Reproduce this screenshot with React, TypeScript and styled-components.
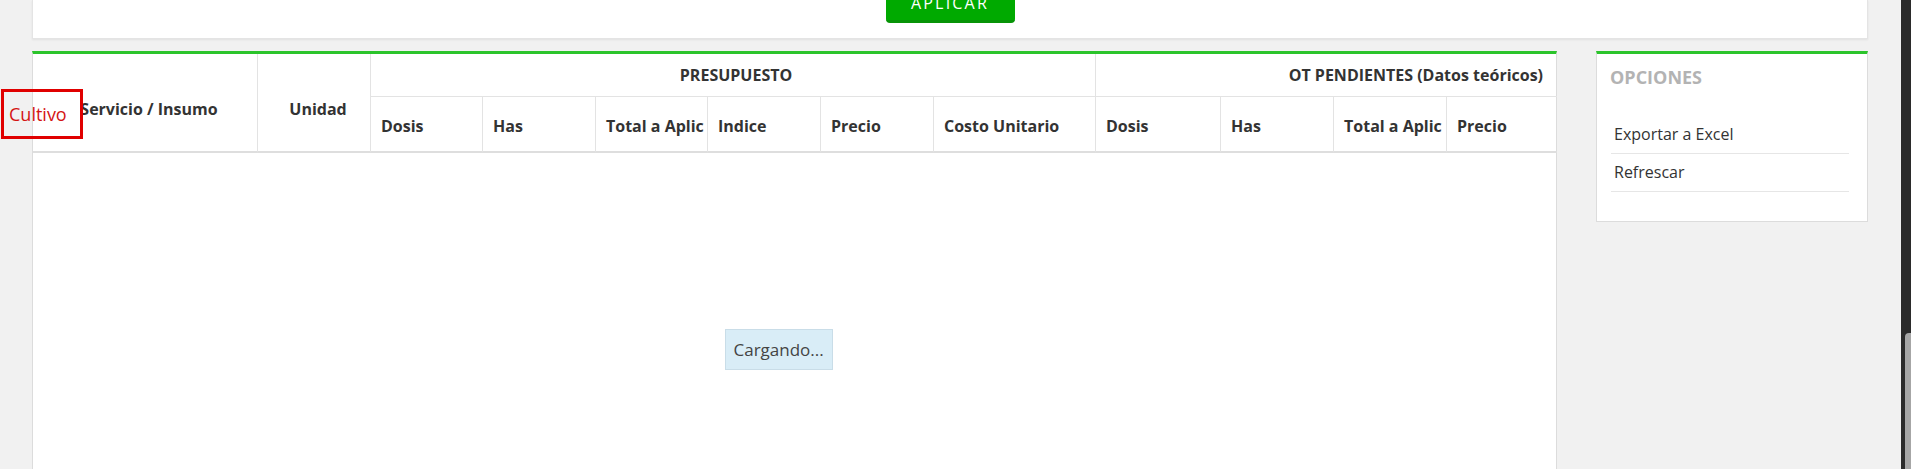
import styled, { createGlobalStyle } from "styled-components";

const GlobalStyle = createGlobalStyle`
  html, body {
    margin: 0;
    padding: 0;
    height: 100%;
    overflow: hidden;
    background: #f1f1f1;
  }
  body {
    font-family: "Open Sans", "Liberation Sans", sans-serif;
    color: #333;
  }
`;

const GREEN = "#2bc42b";

const Screen = styled.div`
  position: relative;
  display: flex;
  height: 469px;
  overflow: hidden;
`;

const Page = styled.div`
  flex: 1;
  min-width: 0;
  padding: 0 33px 0 32px;
  display: flex;
  flex-direction: column;
  gap: 12px;
`;

const FilterBar = styled.div`
  height: 39px;
  flex-shrink: 0;
  box-sizing: border-box;
  background: #fff;
  border: 1px solid #e4e4e4;
  border-top: none;
  box-shadow: 0 1px 2px rgba(0, 0, 0, 0.07);
  display: flex;
  justify-content: center;
  align-items: flex-end;
  padding-bottom: 15px;
`;

const ApplyButton = styled.button`
  flex-shrink: 0;
  width: 129px;
  height: 38px;
  background: #00aa00;
  border: none;
  border-bottom: 3px solid #079407;
  border-radius: 4px;
  color: #fff;
  font-family: "Open Sans", "Liberation Sans", sans-serif;
  font-size: 16px;
  letter-spacing: 2.2px;
  text-transform: uppercase;
  padding: 0;
`;

const Row = styled.div`
  display: flex;
  align-items: flex-start;
  gap: 39px;
`;

const TablePanel = styled.div`
  position: relative;
  width: 1525px;
  height: 460px;
  flex-shrink: 0;
  box-sizing: border-box;
  background: #fff;
  border: 1px solid #dcdcdc;
  border-top: 3px solid ${GREEN};
`;

const HeaderTable = styled.table`
  width: 100%;
  table-layout: fixed;
  border-collapse: separate;
  border-spacing: 0;
`;

const Col = styled.col<{ $w: number }>`
  width: ${p => p.$w}px;
`;

const Th = styled.th<{ $align?: string; $row?: "group" | "sub" | "span"; $last?: boolean }>`
  font-size: 16px;
  font-weight: 700;
  line-height: 22px;
  color: #333;
  white-space: nowrap;
  overflow: hidden;
  text-align: ${p => p.$align ?? "left"};
  vertical-align: middle;
  border-right: ${p => (p.$last ? "none" : "1px solid #e3e3e3")};
  border-bottom: ${p => (p.$row === "group" ? "1px solid #e3e3e3" : "2px solid #dedede")};
  padding: ${p =>
    p.$row === "group"
      ? "10px 14px 10px 20px"
      : p.$row === "span"
      ? "12px 0 0 8px"
      : "18px 0 14px 10px"};
`;

const Loading = styled.div`
  position: absolute;
  top: 275px;
  left: 50%;
  margin-left: -70px;
  background: #d9edf7;
  border: 1px solid #c9dde8;
  color: #444;
  font-size: 17px;
  line-height: 23px;
  padding: 8px;
`;

const OptionsPanel = styled.div`
  width: 272px;
  flex-shrink: 0;
  box-sizing: border-box;
  background: #fff;
  border: 1px solid #dcdcdc;
  border-top: 3px solid ${GREEN};
  padding: 0 18px 29px 13px;
`;

const OptionsTitle = styled.div`
  height: 46px;
  line-height: 46px;
  font-size: 18px;
  font-weight: 700;
  color: #b3b3b3;
  text-transform: uppercase;
`;

const OptionList = styled.ul`
  list-style: none;
  margin: 16px 0 0 0;
  padding: 0 0 0 1px;
`;

const OptionItem = styled.li`
  height: 37px;
  line-height: 37px;
  padding-left: 3px;
  font-size: 16px;
  color: #333;
  border-bottom: 1px solid #e6e6e6;
`;

const CultivoTag = styled.div`
  position: absolute;
  left: 1px;
  top: 89px;
  width: 82px;
  height: 50px;
  box-sizing: border-box;
  border: 3px solid #e00000;
  display: flex;
  align-items: center;
  padding-left: 5px;
  font-size: 18px;
  color: #d41414;
`;

const ScrollTrack = styled.div`
  width: 10px;
  flex-shrink: 0;
  background: #2b2b2b;
  display: flex;
  flex-direction: column;
  padding-top: 333px;
  box-sizing: border-box;
`;

const ScrollThumb = styled.div`
  flex: 1;
  margin-left: 4px;
  background: #a6a6a6;
  border-radius: 4px 0 0 0;
`;

const widths = [225, 113, 112, 113, 112, 113, 113, 162, 125, 113, 113, 110];

const presupuesto = ["Dosis", "Has", "Total a Aplic", "Indice", "Precio", "Costo Unitario"];
const pendientes = ["Dosis", "Has", "Total a Aplic", "Precio"];

export default function App() {
  return (
    <Screen>
      <GlobalStyle />
      <Page>
        <FilterBar>
          <ApplyButton>Aplicar</ApplyButton>
        </FilterBar>
        <Row>
          <TablePanel>
            <HeaderTable>
              <colgroup>
                {widths.map((w, i) => (
                  <Col key={i} $w={w} />
                ))}
              </colgroup>
              <thead>
                <tr>
                  <Th rowSpan={2} $row="span" $align="center">Servicio / Insumo</Th>
                  <Th rowSpan={2} $row="span" $align="center">Unidad</Th>
                  <Th colSpan={6} $row="group" $align="center">PRESUPUESTO</Th>
                  <Th colSpan={4} $row="group" $align="right" $last>OT PENDIENTES (Datos teóricos)</Th>
                </tr>
                <tr>
                  {presupuesto.map(h => (
                    <Th key={"p" + h} $row="sub">{h}</Th>
                  ))}
                  {pendientes.map((h, i) => (
                    <Th key={"o" + h} $row="sub" $last={i === pendientes.length - 1}>{h}</Th>
                  ))}
                </tr>
              </thead>
            </HeaderTable>
            <Loading>Cargando...</Loading>
          </TablePanel>
          <OptionsPanel>
            <OptionsTitle>Opciones</OptionsTitle>
            <OptionList>
              <OptionItem>Exportar a Excel</OptionItem>
              <OptionItem>Refrescar</OptionItem>
            </OptionList>
          </OptionsPanel>
        </Row>
      </Page>
      <ScrollTrack>
        <ScrollThumb />
      </ScrollTrack>
      <CultivoTag>Cultivo</CultivoTag>
    </Screen>
  );
}
